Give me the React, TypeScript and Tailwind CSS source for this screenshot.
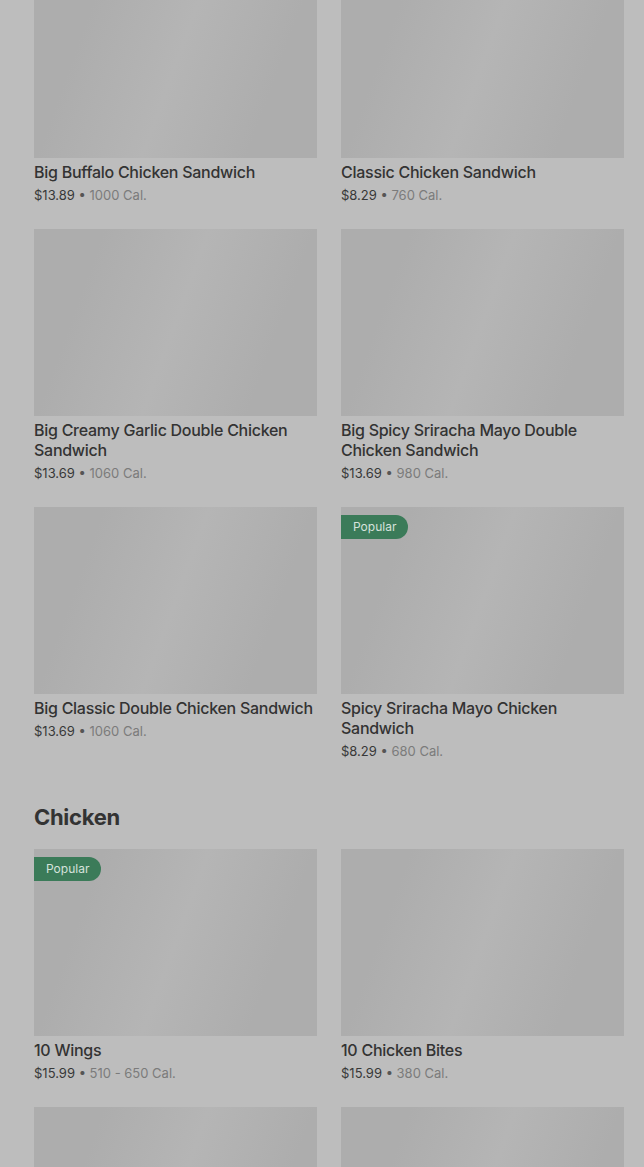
type Item = {
  name: string;
  price: string;
  cal: string;
  popular?: boolean;
};

const sandwiches: Item[] = [
  { name: 'Big Buffalo Chicken Sandwich', price: '$13.89', cal: '1000 Cal.' },
  { name: 'Classic Chicken Sandwich', price: '$8.29', cal: '760 Cal.' },
  { name: 'Big Creamy Garlic Double Chicken Sandwich', price: '$13.69', cal: '1060 Cal.' },
  { name: 'Big Spicy Sriracha Mayo Double Chicken Sandwich', price: '$13.69', cal: '980 Cal.' },
  { name: 'Big Classic Double Chicken Sandwich', price: '$13.69', cal: '1060 Cal.' },
  { name: 'Spicy Sriracha Mayo Chicken Sandwich', price: '$8.29', cal: '680 Cal.', popular: true },
];

const chicken: Item[] = [
  { name: '10 Wings', price: '$15.99', cal: '510 - 650 Cal.', popular: true },
  { name: '10 Chicken Bites', price: '$15.99', cal: '380 Cal.' },
  { name: '', price: '', cal: '' },
  { name: '', price: '', cal: '' },
];

function MenuCard({ item }: { item: Item }) {
  return (
    <div className="flex flex-col">
      <div className="relative h-[187px] w-full bg-[linear-gradient(110deg,#adadad_20%,#b5b5b5_50%,#adadad_80%)]">
        {item.popular && (
          <span className="absolute left-0 top-2 flex h-6 items-center rounded-r-full bg-[#3b7b59] px-3 text-[12px] text-[#d6e2dc]">
            Popular
          </span>
        )}
      </div>
      {item.name && (
        <>
          <div className="mt-1 text-[16px] font-medium leading-5 tracking-[-0.27px] text-[#333]">
            {item.name}
          </div>
          <div className="mt-[3px] text-[13px] leading-5">
            <span className="text-[#383838]">{item.price}</span>
            <span className="text-[#555]"> • </span>
            <span className="text-[#7b7b7b]">{item.cal}</span>
          </div>
        </>
      )}
    </div>
  );
}

export default function App() {
  return (
    <div className="h-[1167px] overflow-hidden bg-[#bdbdbd] font-['Inter',sans-serif]">
      <div className="mt-[-29px] pl-[34px] pr-5">
        <div className="grid grid-cols-2 gap-6">
          {sandwiches.map((item) => (
            <MenuCard key={item.name} item={item} />
          ))}
        </div>

        <h2 className="mb-4 mt-10 text-[22px] font-bold leading-8 tracking-[-0.3px] text-[#333]">
          Chicken
        </h2>

        <div className="grid grid-cols-2 gap-6">
          {chicken.map((item, i) => (
            <MenuCard key={i} item={item} />
          ))}
        </div>
      </div>
    </div>
  );
}
